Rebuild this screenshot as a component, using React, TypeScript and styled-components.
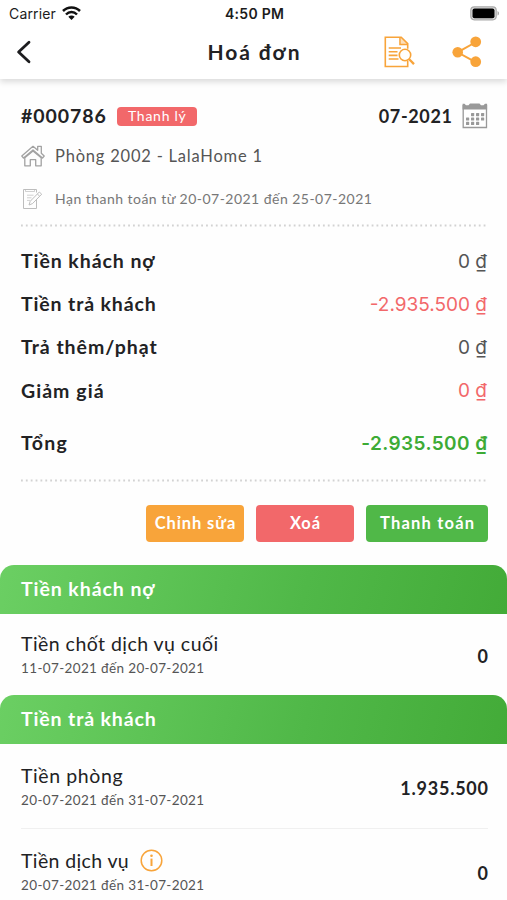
import React from "react";
import styled, { createGlobalStyle } from "styled-components";

const GlobalStyle = createGlobalStyle`
  * { box-sizing: border-box; }
  body { margin: 0; background: #fff; }
`;

const ORANGE = "#f8a43a";
const RED = "#f2686a";
const GREEN = "#50b848";
const INK = "#222224";

const Screen = styled.div`
  display: flex;
  flex-direction: column;
  height: 900px;
  overflow: hidden;
  background: #fefefe;
  color: ${INK};
  font-family: Lato, "Open Sans", sans-serif;
  white-space: nowrap;
`;

const Text = styled.span<{ $size: number; $gap?: number; $weight?: number; $color?: string }>`
  display: block;
  font-size: ${(p) => p.$size}px;
  font-weight: ${(p) => p.$weight ?? 400};
  letter-spacing: ${(p) => p.$gap ?? 0}px;
  margin-right: ${(p) => -(p.$gap ?? 0)}px;
  color: ${(p) => p.$color ?? "inherit"};
  line-height: 24px;
`;

const SystemText = styled(Text)`
  font-family: Inter, "Liberation Sans", sans-serif;
`;

const StatusBar = styled.div`
  display: grid;
  grid-template-columns: 1fr auto 1fr;
  align-items: center;
  height: 27px;
  padding: 0 7px 0 9px;
  flex: none;
  background: #fff;
  color: #1c1c1c;
`;

const Carrier = styled.div`
  display: flex;
  align-items: center;
  gap: 6px;
`;

const BatterySlot = styled.div`
  display: flex;
  justify-content: flex-end;
`;

const Header = styled.header`
  display: grid;
  grid-template-columns: 1fr auto 1fr;
  align-items: center;
  height: 52px;
  padding: 0 24px 2px 16px;
  flex: none;
  background: #fff;
  box-shadow: 0 3px 6px rgba(0, 0, 0, 0.14);
  clip-path: inset(0 0 -12px 0);
`;

const Title = styled(Text)`
  padding: 0 0 0 8px;
`;

const HeaderActions = styled.div`
  display: flex;
  justify-content: flex-end;
  align-items: center;
  gap: 37px;
  padding-right: 1px;
`;

const Summary = styled.section`
  display: flex;
  flex-direction: column;
  padding: 20px 19px 0 21px;
  flex: none;
`;

const InvoiceRow = styled.div`
  display: flex;
  align-items: center;
  height: 34px;
`;

const Badge = styled.div`
  display: flex;
  align-items: center;
  justify-content: center;
  width: 80px;
  height: 19px;
  margin-left: 11px;
  border-radius: 4px;
  background: ${RED};
`;

const Period = styled.div`
  display: flex;
  align-items: center;
  gap: 10px;
  margin-left: auto;
`;

const DetailRow = styled.div<{ $height: number }>`
  display: flex;
  align-items: center;
  gap: 10px;
  height: ${(p) => p.$height}px;
`;

const DottedLine = styled.svg`
  display: block;
  width: 467px;
  height: 3px;
`;

const Amounts = styled.div`
  display: flex;
  flex-direction: column;
  padding: 9px 1px 0 0;
`;

const AmountRow = styled.div<{ $total?: boolean }>`
  display: flex;
  align-items: center;
  justify-content: space-between;
  height: ${(p) => (p.$total ? 62 : 43.2)}px;
  margin-bottom: ${(p) => (p.$total ? 4.2 : 0)}px;

  > :first-child {
    padding-bottom: 1px;
  }
`;

const Buttons = styled.div`
  display: flex;
  justify-content: flex-end;
  gap: 12px;
  padding: 23px 0;
`;

const Button = styled.button<{ $color: string; $width: number }>`
  display: flex;
  align-items: center;
  justify-content: center;
  width: ${(p) => p.$width}px;
  height: 37px;
  padding: 0;
  border: 0;
  border-radius: 4px;
  background: ${(p) => p.$color};
  color: #fff;
  font-family: inherit;
`;

const SectionHeader = styled.div`
  display: flex;
  align-items: center;
  height: 49px;
  padding: 0 21px;
  flex: none;
  border-radius: 14px 14px 0 0;
  background: linear-gradient(105deg, #6bcf63 0%, #50b848 60%, #43ab38 100%);
  color: #fff;
`;

const Item = styled.div<{ $height: number; $divided?: boolean }>`
  display: flex;
  align-items: center;
  justify-content: space-between;
  height: ${(p) => p.$height}px;
  margin: 0 19px 0 21px;
  padding: 4px 0 0;
  flex: none;
  border-bottom: ${(p) => (p.$divided ? "1px solid #f0f0f0" : "0")};
`;

const ItemName = styled.div`
  display: flex;
  align-items: center;
  gap: 11px;
  height: 24px;
`;

const LINES = [
  { label: "Tiền khách nợ", gap: 0.93, value: "0 ₫", color: "#555" },
  { label: "Tiền trả khách", gap: 0.87, value: "-2.935.500 ₫", color: RED },
  { label: "Trả thêm/phạt", gap: 0.97, value: "0 ₫", color: "#555" },
  { label: "Giảm giá", gap: 1.05, value: "0 ₫", color: RED },
];

const Dots = () => (
  <DottedLine viewBox="0 0 467 3">
    <line x1="0" x2="467" y1="1.5" y2="1.5" stroke="#d2d2d2" strokeWidth="1.8" strokeDasharray="1.8 3.07" />
  </DottedLine>
);

const WifiIcon = () => (
  <svg width="19" height="15" viewBox="0 0 19 15" fill="none" stroke="#111" strokeWidth="2.5">
    <path d="M1 5C5.8 .2 13.2 .2 18 5" />
    <path d="M4 8.5C7.1 5.3 11.9 5.3 15 8.5" />
    <path d="M6.3 10.8C8.2 9 10.8 9 12.7 10.8L9.5 14Z" fill="#111" stroke="none" />
  </svg>
);

const BatteryIcon = () => (
  <svg width="30" height="15" viewBox="0 0 30 15">
    <rect x=".8" y=".8" width="25.4" height="13" rx="3.5" fill="#ddd" stroke="#aaa" strokeWidth="1.2" />
    <rect x="2.5" y="2.4" width="22" height="9.8" rx="2" fill="#000" />
    <path d="M27.5 5C29.5 5.8 29.5 8.8 27.5 9.6Z" fill="#aaa" />
  </svg>
);

const BackIcon = () => (
  <svg width="16" height="24" viewBox="0 0 16 24" fill="none" stroke="#1d1d1f" strokeWidth="2.8" strokeLinecap="round" strokeLinejoin="round">
    <path d="M13 2.2L2.6 12L13 21.8" />
  </svg>
);

const SearchDocIcon = () => (
  <svg width="31" height="32" viewBox="0 0 31 32" fill="none" stroke={ORANGE} strokeWidth="1.6">
    <path d="M23.7 12.8V7.6L17.2 1.2H1.3V30.5H23.7V24.7" />
    <path d="M16 1.4V8.5H23.5" />
    <path d="M17 1.4L23.5 8.2H17Z" fill={ORANGE} fillOpacity=".35" stroke="none" />
    <path d="M4.7 12H17M4.7 15.8H13.5M4.7 19.4H13.5M4.7 23H14.5" />
    <circle cx="21" cy="19" r="5.7" fill="#fff" />
    <path d="M25.2 23.2L30 28.1" strokeWidth="2.3" />
  </svg>
);

const ShareIcon = () => (
  <svg width="30" height="32" viewBox="0 0 30 32" fill={ORANGE}>
    <path d="M24 6L5.6 16.3L24 26.3" fill="none" stroke={ORANGE} strokeWidth="2" />
    <circle cx="5.7" cy="16.2" r="5.3" />
    <circle cx="23.7" cy="5.8" r="5.4" />
    <circle cx="23.7" cy="25.7" r="5.4" />
  </svg>
);

const CalendarIcon = () => (
  <svg width="26" height="26" viewBox="0 0 26 26">
    <path d="M1.2 2V24.5H24.5V2" fill="#fff" stroke="#999" strokeWidth="1.3" />
    <path d="M.6 .8H2.5L4 2.2H6.5L8 .5H17.5L19 2.2H21.5L23 .8H25.1V6.5H.6Z" fill="#999" />
    {[
      [9, 11], [14, 11], [19, 11],
      [4, 15.4], [9, 15.4], [14, 15.4], [19, 15.4],
      [4, 19.8], [9, 19.8], [14, 19.8],
    ].map(([x, y]) => (
      <rect key={`${x}-${y}`} x={x} y={y - 1} width="3.2" height="3.2" rx=".6" fill="#999" />
    ))}
  </svg>
);

const HomeIcon = () => (
  <svg width="24" height="22" viewBox="0 0 24 22" fill="none" stroke="#a2a2a2" strokeWidth="1.3" strokeLinejoin="round">
    <path d="M12 1.3L.8 11L2.5 13L12 4.9L21.5 13L23.2 11L20.3 8.3V1.3H16.7V5.3Z" />
    <path d="M3.8 12.8V20.8H9.3V14.7H14.7V20.8H20.2V12.8L12 6Z" />
  </svg>
);

const NoteIcon = () => (
  <svg width="24" height="22" viewBox="0 0 24 22" fill="none" stroke="#bdbdbd" strokeWidth="1">
    <path d="M15.5 12V20.5H2.5V1.5H15.5V4.5" />
    <path d="M4.5 1.8V3.5H13.5V1.8M6 7.2H12.5M6 9.8H10.5M6 12.4H9" strokeWidth=".7" />
    <path d="M8 17L9.2 13.3L18.3 4L20.7 6.2L11.5 15.6ZM16.3 6L18.7 8.2" />
  </svg>
);

const InfoIcon = () => (
  <svg width="23" height="23" viewBox="0 0 23 23" fill="none" stroke={ORANGE} strokeWidth="1.5">
    <circle cx="11.5" cy="11.5" r="10.3" />
    <path d="M11.5 9.6V17" strokeWidth="2" />
    <circle cx="11.5" cy="6.7" r="1.3" fill={ORANGE} stroke="none" />
  </svg>
);

const ItemText = ({ name, gap, dates, info }: { name: string; gap: number; dates: string; info?: boolean }) => (
  <div>
    <ItemName>
      <Text $size={19.5} $gap={gap}>{name}</Text>
      {info && <InfoIcon />}
    </ItemName>
    <Text $size={13.5} $gap={0.36} $color="#555">{dates}</Text>
  </div>
);

export default function App() {
  return (
    <>
      <GlobalStyle />
      <Screen>
        <StatusBar>
          <Carrier>
            <SystemText $size={14} $gap={0.15}>Carrier</SystemText>
            <WifiIcon />
          </Carrier>
          <SystemText $size={14} $weight={600} $gap={0.3}>4:50 PM</SystemText>
          <BatterySlot><BatteryIcon /></BatterySlot>
        </StatusBar>
        <Header>
          <BackIcon />
          <Title $size={21} $weight={700} $gap={1.9}>Hoá đơn</Title>
          <HeaderActions>
            <SearchDocIcon />
            <ShareIcon />
          </HeaderActions>
        </Header>

        <Summary>
          <InvoiceRow>
            <Text $size={19.5} $weight={700} $gap={0.95}>#000786</Text>
            <Badge><Text $size={14} $gap={0.75} $color="#fff">Thanh lý</Text></Badge>
            <Period>
              <Text $size={18} $weight={700} $gap={0.65}>07-2021</Text>
              <CalendarIcon />
            </Period>
          </InvoiceRow>
          <DetailRow $height={46}>
            <HomeIcon />
            <Text $size={16.5} $gap={0.79} $color="#555">Phòng 2002 - LalaHome 1</Text>
          </DetailRow>
          <DetailRow $height={40}>
            <NoteIcon />
            <Text $size={14} $gap={0.47} $color="#777">Hạn thanh toán từ 20-07-2021 đến 25-07-2021</Text>
          </DetailRow>
          <DetailRow $height={12}><Dots /></DetailRow>

          <Amounts>
            {LINES.map((line) => (
              <AmountRow key={line.label}>
                <Text $size={19.5} $weight={700} $gap={line.gap}>{line.label}</Text>
                <SystemText $size={19} $color={line.color}>{line.value}</SystemText>
              </AmountRow>
            ))}
            <AmountRow $total>
              <Text $size={19.5} $weight={700} $gap={1.2}>Tổng</Text>
              <SystemText $size={19} $weight={600} $gap={0.4} $color="#3dab35">-2.935.500 ₫</SystemText>
            </AmountRow>
          </Amounts>
          <Dots />

          <Buttons>
            <Button $color={ORANGE} $width={98}><Text $size={16.5} $weight={700} $gap={0.9}>Chỉnh sửa</Text></Button>
            <Button $color={RED} $width={98}><Text $size={16.5} $weight={700} $gap={1}>Xoá</Text></Button>
            <Button $color={GREEN} $width={122}><Text $size={16.5} $weight={700} $gap={1.2}>Thanh toán</Text></Button>
          </Buttons>
        </Summary>

        <SectionHeader><Text $size={19.5} $weight={700} $gap={0.93}>Tiền khách nợ</Text></SectionHeader>
        <Item $height={81}>
          <ItemText name="Tiền chốt dịch vụ cuối" gap={0.46} dates="11-07-2021 đến 20-07-2021" />
          <Text $size={18} $weight={700}>0</Text>
        </Item>
        <SectionHeader><Text $size={19.5} $weight={700} $gap={0.87}>Tiền trả khách</Text></SectionHeader>
        <Item $height={85} $divided>
          <ItemText name="Tiền phòng" gap={0.6} dates="20-07-2021 đến 31-07-2021" />
          <Text $size={18} $weight={700} $gap={0.75}>1.935.500</Text>
        </Item>
        <Item $height={84}>
          <ItemText name="Tiền dịch vụ" gap={0.38} dates="20-07-2021 đến 31-07-2021" info />
          <Text $size={18} $weight={700}>0</Text>
        </Item>
      </Screen>
    </>
  );
}
